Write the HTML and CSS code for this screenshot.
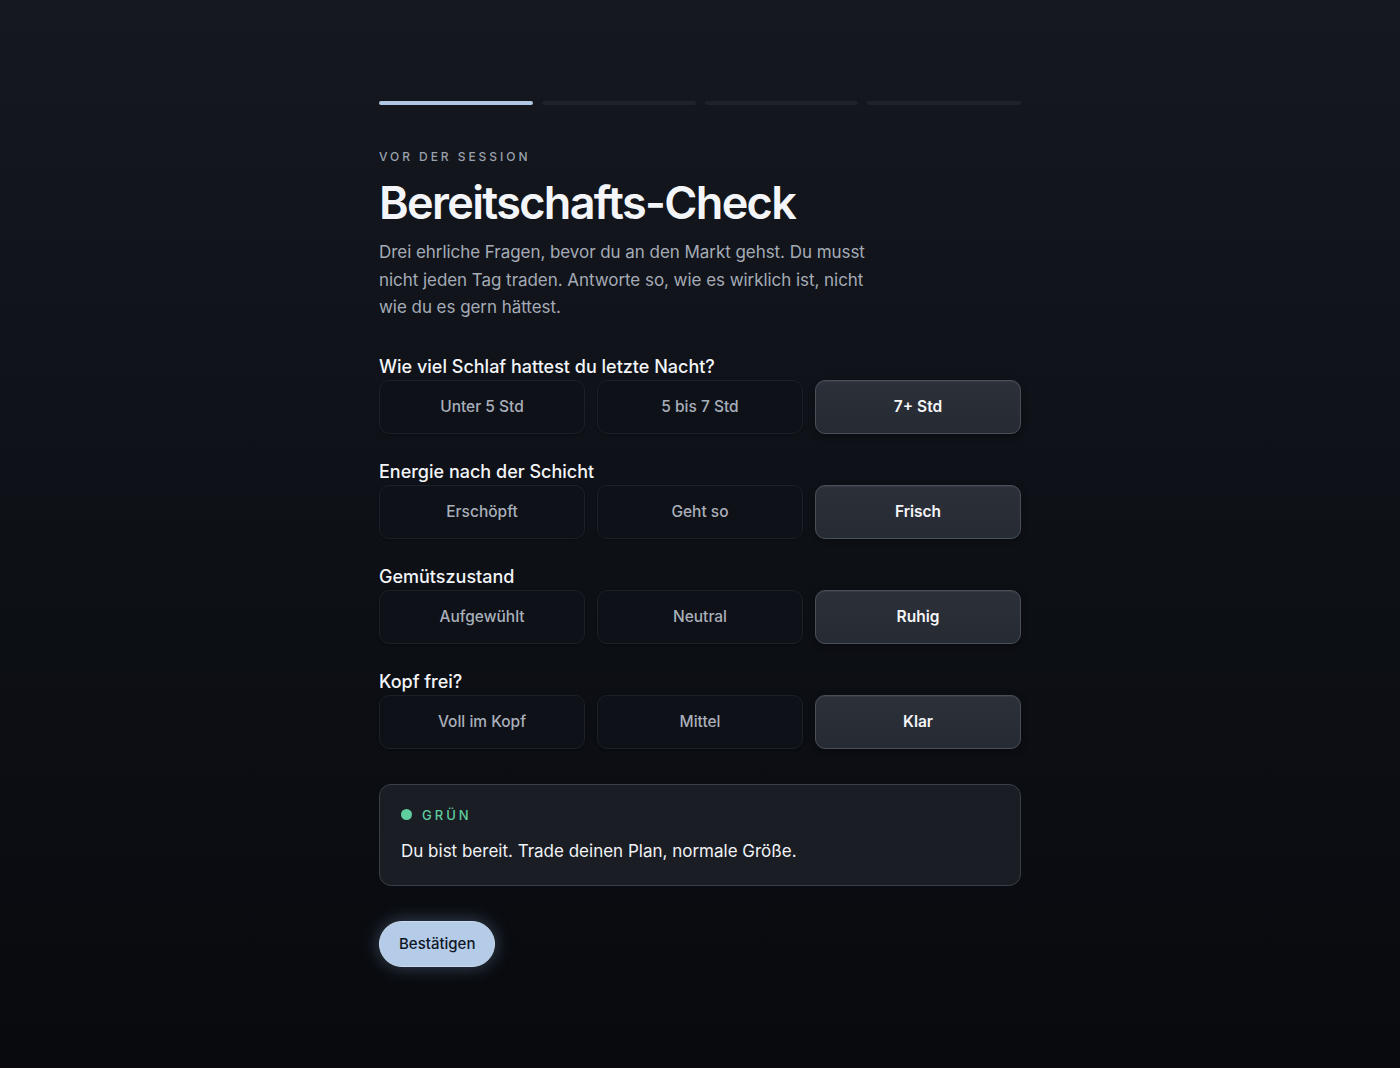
FILE: index.html
```html
<!DOCTYPE html>
<html lang="de">
<head>
<meta charset="utf-8">
<title>Bereitschafts-Check</title>
<link rel="stylesheet" href="styles.css">
</head>
<body>
<main class="page">
  <div class="progress">
    <span class="seg seg-active"></span>
    <span class="seg"></span>
    <span class="seg"></span>
    <span class="seg"></span>
  </div>
  <p class="eyebrow">VOR DER SESSION</p>
  <h1 class="title">Bereitschafts-Check</h1>
  <p class="intro">Drei ehrliche Fragen, bevor du an den Markt gehst. Du musst nicht jeden Tag traden. Antworte so, wie es wirklich ist, nicht wie du es gern hättest.</p>

  <section class="question">
    <h2 class="q-label">Wie viel Schlaf hattest du letzte Nacht?</h2>
    <div class="options">
      <button class="opt">Unter 5 Std</button>
      <button class="opt">5 bis 7 Std</button>
      <button class="opt opt-selected">7+ Std</button>
    </div>
  </section>
  <section class="question">
    <h2 class="q-label">Energie nach der Schicht</h2>
    <div class="options">
      <button class="opt">Erschöpft</button>
      <button class="opt">Geht so</button>
      <button class="opt opt-selected">Frisch</button>
    </div>
  </section>
  <section class="question">
    <h2 class="q-label">Gemütszustand</h2>
    <div class="options">
      <button class="opt">Aufgewühlt</button>
      <button class="opt">Neutral</button>
      <button class="opt opt-selected">Ruhig</button>
    </div>
  </section>
  <section class="question">
    <h2 class="q-label">Kopf frei?</h2>
    <div class="options">
      <button class="opt">Voll im Kopf</button>
      <button class="opt">Mittel</button>
      <button class="opt opt-selected">Klar</button>
    </div>
  </section>

  <div class="result">
    <div class="result-head"><span class="dot"></span><span class="status">GRÜN</span></div>
    <p class="result-text">Du bist bereit. Trade deinen Plan, normale Größe.</p>
  </div>

  <button class="confirm">Bestätigen</button>
</main>
</body>
</html>
```

FILE: styles.css
```css
* { box-sizing: border-box; }
html, body { height: 100%; }
body {
  margin: 0;
  min-height: 1068px;
  background: linear-gradient(180deg, #15181f 0%, #0e1117 45%, #080a0e 100%);
  font-family: Inter, "Noto Sans", sans-serif;
  color: #eef0f3;
}
.page {
  width: 642px;
  margin: 0 auto;
  padding-top: 101px;
  display: flex;
  flex-direction: column;
}
.progress {
  display: grid;
  grid-template-columns: repeat(4, 1fr);
  gap: 9px;
}
.seg {
  height: 4px;
  border-radius: 2px;
  background: #1e222a;
}
.seg-active { background: #b0c8e4; }
.eyebrow {
  margin: 44px 0 0;
  font-size: 12px;
  line-height: 16px;
  letter-spacing: 2.95px;
  color: #9aa1ad;
  font-weight: 500;
}
.title {
  margin: 10px 0 0;
  font-size: 45px;
  line-height: 56px;
  font-weight: 600;
  letter-spacing: -1.65px;
  color: #f3f5f8;
}
.intro {
  margin: 8px 0 0;
  max-width: 500px;
  font-size: 17px;
  line-height: 27.5px;
  letter-spacing: -0.05px;
  color: #a5abb6;
}
.question { margin-top: 34px; }
.question + .question { margin-top: 27px; }
.q-label {
  margin: 0 0 2px;
  font-size: 18px;
  line-height: 22px;
  font-weight: 500;
  color: #f3f5f8;
}
.options {
  display: grid;
  grid-template-columns: repeat(3, 1fr);
  gap: 12px;
}
.opt {
  height: 54px;
  border-radius: 10px;
  border: 1px solid #1c2028;
  background: #0e1117;
  color: #a9afba;
  font-family: inherit;
  font-size: 15.5px;
  font-weight: 500;
  box-shadow: 0 1px 2px rgba(0,0,0,0.3);
}
.opt-selected {
  background: linear-gradient(180deg, #2b3039 0%, #262b33 100%);
  border-color: #4a505a;
  color: #f5f6f8;
  font-weight: 600;
  box-shadow: inset 0 1px 0 rgba(255,255,255,0.05), 0 2px 6px rgba(0,0,0,0.35);
}
.result {
  margin-top: 35px;
  border: 1px solid #3a3f49;
  border-radius: 12px;
  background: #1a1d24;
  padding: 22px 21px 22px;
}
.result-head {
  display: flex;
  align-items: center;
  gap: 10px;
}
.dot {
  width: 11px;
  height: 11px;
  border-radius: 50%;
  background: #5fcf9f;
}
.status {
  font-size: 13px;
  line-height: 16px;
  font-weight: 500;
  letter-spacing: 3px;
  color: #5fcf9f;
}
.result-text {
  margin: 16px 0 0;
  font-size: 17px;
  line-height: 24px;
  color: #f1f3f6;
}
.confirm {
  align-self: flex-start;
  margin-top: 35px;
  height: 46px;
  padding: 0 19px;
  border: 1px solid #c9dbef;
  border-radius: 23px;
  background: #b4cce8;
  color: #0f1626;
  font-family: inherit;
  font-size: 15px;
  font-weight: 500;
  box-shadow: 0 0 18px rgba(150,185,230,0.35);
}
```
